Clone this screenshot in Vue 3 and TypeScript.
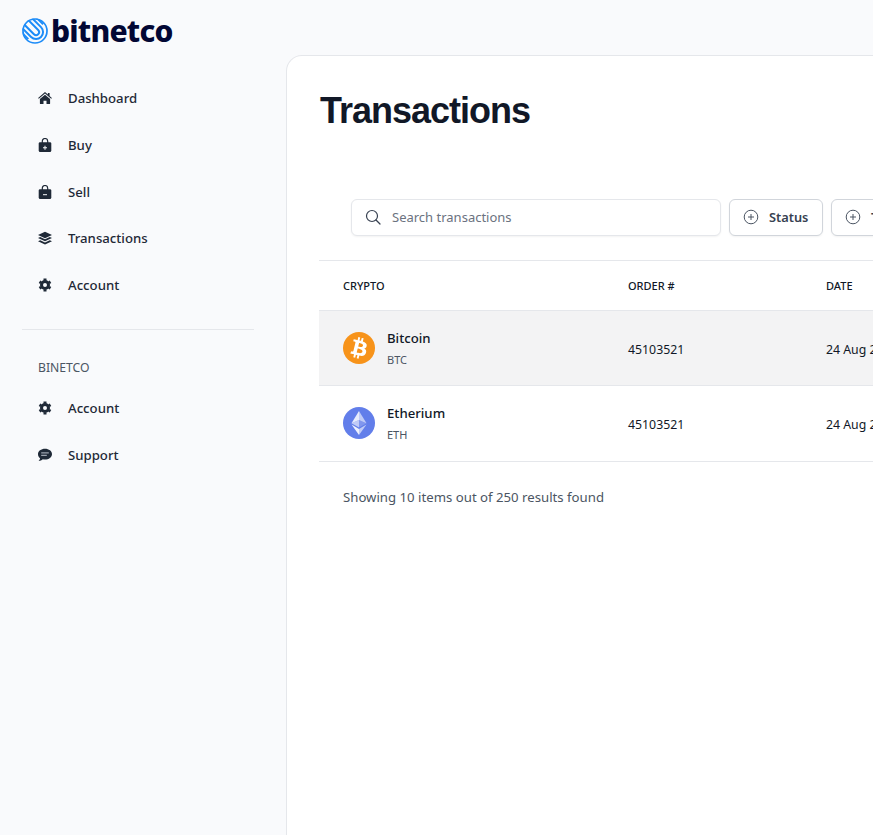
<script setup lang="ts">
interface Nav { label: string; icon: string }
const primaryNav: Nav[] = [
  { label: 'Dashboard', icon: 'home' },
  { label: 'Buy', icon: 'buy' },
  { label: 'Sell', icon: 'sell' },
  { label: 'Transactions', icon: 'layers' },
  { label: 'Account', icon: 'gear' },
]
const secondaryNav: Nav[] = [
  { label: 'Account', icon: 'gear' },
  { label: 'Support', icon: 'chat' },
]
const rows = [
  { name: 'Bitcoin', code: 'BTC', order: '45103521', date: '24 Aug 2022', coin: 'btc', active: true },
  { name: 'Etherium', code: 'ETH', order: '45103521', date: '24 Aug 2022', coin: 'eth', active: false },
]
const filters = ['Status', 'Type']
const teeth = 'M7 .6V2.500M7 11.500v1.900M12.500 3.800 10.900 4.750M1.500 10.200l1.600-.95M12.500 10.200l-1.600-.95M1.500 3.800l1.600.95'
const chat = 'M7 .8c3.900 0 7 2.400 7 5.400s-3.100 5.400-7 5.400c-.8 0-1.500-.1-2.200-.3C3.700 12.400 2.200 13 .6 13c.8-.8 1.300-1.700 1.500-2.700C.8 9.300 0 7.800 0 6.200 0 3.200 3.100.8 7 .8z'
</script>

<template>
  <div class="page">
    <aside class="sidebar">
      <div class="brand">
        <svg class="brand-mark" viewBox="0 0 26 26" fill="none" stroke="#1d8cf8">
          <defs>
            <clipPath id="mark-clip"><circle cx="13" cy="13" r="12.500" /></clipPath>
          </defs>
          <circle cx="13" cy="13" r="12" stroke-width="1.700" />
          <g clip-path="url(#mark-clip)" transform="rotate(-45 13 13)" stroke-width="2">
            <path d="M10 -4V14.500a3 3 0 0 0 6 0V-4" />
            <path d="M6 -4V14.500a7 7 0 0 0 14 0V-4" />
            <path d="M2.500 -4V14" />
            <path d="M23.500 -4V14" />
          </g>
        </svg>
        <span class="brand-name">bitnetco</span>
      </div>
      <nav class="nav">
        <a v-for="item in primaryNav" :key="item.label" class="nav-item">
          <svg class="nav-icon" viewBox="0 0 14 14" fill="#1f2937">
            <template v-if="item.icon === 'home'">
              <path d="M7 1 .1 6.900l.7.8L7 2.500l6.200 5.200.7-.8-2.300-2V2h-1.700v1.400z" />
              <path d="M7 3.700 1.900 8v4.400q0 .6.6.6h3V9.800h3V13h3q.6 0 .6-.6V8z" />
            </template>
            <template v-else-if="item.icon === 'buy' || item.icon === 'sell'">
              <path d="M2 4.200h10q1.300 0 1.300 1.300v7q0 1.500-1.500 1.500H2.200Q.7 14 .7 12.500v-7Q.7 4.200 2 4.200z" />
              <path d="M4.300 5V3.200a2.700 2.700 0 0 1 5.400 0V5" fill="none" stroke="#1f2937" stroke-width="1.200" />
              <path v-if="item.icon === 'buy'" fill="#f9fafc" d="M6.500 7.800h1v1.500H9v1H7.500v1.500h-1v-1.500H5v-1h1.500z" />
              <path v-else fill="#f9fafc" d="M5 9.200h4v1H5z" />
            </template>
            <template v-else-if="item.icon === 'layers'">
              <path d="M7 .8 14 4 7 7.200 0 4z" />
              <path d="M2.200 6.100 0 7.100l7 3.200 7-3.200-2.200-1L7 8.300z" />
              <path d="M2.200 9.200 0 10.200l7 3.200 7-3.200-2.200-1L7 11.400z" />
            </template>
            <template v-else-if="item.icon === 'gear'">
              <circle cx="7" cy="7" r="3.500" fill="none" stroke="#1f2937" stroke-width="3" />
              <path :d="teeth" stroke="#1f2937" stroke-width="3" fill="none" />
            </template>
          </svg>
          <span>{{ item.label }}</span>
        </a>
      </nav>
      <hr class="divider" />
      <p class="section-label">BINETCO</p>
      <nav class="nav">
        <a v-for="item in secondaryNav" :key="item.label" class="nav-item">
          <svg class="nav-icon" viewBox="0 0 14 14" fill="#1f2937">
            <template v-if="item.icon === 'gear'">
              <circle cx="7" cy="7" r="3.500" fill="none" stroke="#1f2937" stroke-width="3" />
              <path :d="teeth" stroke="#1f2937" stroke-width="3" fill="none" />
            </template>
            <template v-else>
              <path :d="chat" />
              <path fill="#9ca3af" d="M3.200 4.300h7.600v1.100H3.200zM3.200 6.800h5.600v1.100H3.200z" />
            </template>
          </svg>
          <span>{{ item.label }}</span>
        </a>
      </nav>
    </aside>

    <main class="content">
      <h1 class="title">Transactions</h1>
      <div class="toolbar">
        <label class="search">
          <svg class="search-icon" viewBox="0 0 16 16" fill="none" stroke="#374151" stroke-width="1.200" stroke-linecap="round">
            <circle cx="7" cy="7" r="5.500" />
            <path d="m11 11 4 4" />
          </svg>
          <span>Search transactions</span>
        </label>
        <button v-for="f in filters" :key="f" class="filter" type="button">
          <svg class="filter-icon" viewBox="0 0 16 16" fill="none" stroke="#4b5563" stroke-width="1">
            <circle cx="8" cy="8" r="6.800" />
            <path d="M8 5v6M5 8h6" />
          </svg>
          <span>{{ f }}</span>
        </button>
      </div>
      <div class="table">
        <div class="row head">
          <span>CRYPTO</span>
          <span>ORDER #</span>
          <span>DATE</span>
        </div>
        <div v-for="r in rows" :key="r.code" class="row body" :class="{ active: r.active }">
          <div class="coin">
            <svg v-if="r.coin === 'btc'" class="coin-icon" viewBox="0 0 32 32">
              <circle cx="16" cy="16" r="16" fill="#f7931a" />
              <path transform="translate(16 16) scale(1.100) translate(-16 -16)" fill="#fff" d="M23 14c.3-2.100-1.300-3.200-3.500-4l.7-2.800-1.700-.4-.7 2.700-1.400-.3.7-2.700-1.700-.4-.7 2.800-1.100-.3-2.400-.6-.4 1.800s1.300.3 1.200.3c.7.2.800.6.8 1l-1.900 7.700c-.1.200-.3.500-.8.4 0 0-1.200-.3-1.200-.3l-.8 2 2.200.5 1.200.3-.7 2.800 1.700.4.700-2.800 1.400.4-.7 2.800 1.700.4.700-2.800c2.900.6 5.100.3 6-2.300.7-2.100 0-3.300-1.600-4.100 1.200-.3 2-1 2.300-2.600zm-3.900 5.500c-.5 2.100-4 1-5.200.7l.9-3.700c1.200.3 4.800.9 4.300 3zm.5-5.500c-.5 1.900-3.400.9-4.300.7l.8-3.300c1 .2 4 .7 3.500 2.600z" />
            </svg>
            <svg v-else class="coin-icon" viewBox="0 0 32 32">
              <circle cx="16" cy="16" r="16" fill="#627eea" />
              <path fill="#fff" fill-opacity=".6" d="M16 4v8.900l7.500 3.300z" />
              <path fill="#fff" fill-opacity=".85" d="M16 4 8.500 16.200l7.500-3.300z" />
              <path fill="#fff" fill-opacity=".6" d="M16 22v6l7.500-10.400z" />
              <path fill="#fff" fill-opacity=".9" d="M16 22l-7.500-4.400L16 28z" />
              <path fill="#fff" fill-opacity=".2" d="m16 20.600 7.500-4.400-7.500-3.300z" />
              <path fill="#fff" fill-opacity=".6" d="m8.500 16.200 7.500 4.400v-7.700z" />
            </svg>
            <div class="coin-text">
              <span class="coin-name">{{ r.name }}</span>
              <span class="coin-code">{{ r.code }}</span>
            </div>
          </div>
          <span class="cell">{{ r.order }}</span>
          <span class="cell">{{ r.date }}</span>
        </div>
      </div>
      <p class="summary">Showing 10 items out of 250 results found</p>
    </main>
  </div>
</template>

<style>
html, body { margin: 0; overflow: hidden; background: #f9fafc; }
</style>

<style scoped>
.page {
  display: flex;
  width: 873px;
  height: 835px;
  overflow: hidden;
  background: #f9fafc;
  font-family: "Noto Sans", sans-serif;
  color: #111827;
}
.sidebar { flex: 0 0 286px; padding: 0 32px 0 22px; box-sizing: border-box; }
.brand { display: flex; align-items: center; height: 62px; gap: 3px; margin-bottom: 13px; }
.brand-mark { width: 26px; height: 26px; flex: none; }
.brand-name { font-size: 30px; font-weight: 800; line-height: 40px; letter-spacing: -.8px; color: #020734; }
.nav { display: flex; flex-direction: column; }
.nav-item {
  display: flex;
  align-items: center;
  gap: 16px;
  height: 46.700px;
  padding-left: 16px;
  font-size: 13.200px;
  font-weight: 500;
  color: #1f2937;
}
.nav-icon { width: 14px; height: 14px; flex: none; }
.divider { border: 0; border-top: 1px solid #e5e7eb; margin: 20.500px 0 0; }
.section-label {
  margin: 29px 0 8px 16px;
  font-size: 12.200px;
  line-height: 18px;
  font-weight: 400;
  color: #4b5563;
}
.content {
  flex: 0 0 800px;
  height: 800px;
  margin-top: 55px;
  padding: 33px 0 0 32px;
  box-sizing: border-box;
  background: #fff;
  border: 1px solid #e5e7eb;
  border-bottom: 0;
  border-radius: 16px 0 0 0;
}
.title {
  margin: 0;
  padding-left: 1px;
  font-family: "Liberation Sans", Arial, sans-serif;
  font-size: 36px;
  line-height: 44px;
  font-weight: 700;
  letter-spacing: -1px;
  color: #111827;
}
.toolbar { display: flex; gap: 8px; margin: 66px 0 24px 32px; }
.search, .filter {
  display: flex;
  align-items: center;
  box-sizing: border-box;
  height: 37px;
  padding-bottom: 2px;
  background: #fff;
  border-radius: 6px;
  font-family: inherit;
}
.search {
  width: 370px;
  flex: none;
  gap: 11px;
  padding-left: 13px;
  border: 1px solid #e5e7eb;
  box-shadow: 0 1px 2px rgba(0, 0, 0, .05);
  font-size: 13px;
  color: #6b7280;
}
.search-icon { width: 16px; height: 16px; }
.filter {
  flex: none;
  gap: 10px;
  width: 94px;
  padding-left: 13px;
  padding-right: 13px;
  border: 1px solid #d1d5db;
  box-shadow: 0 1px 2px rgba(0, 0, 0, .05);
  font-size: 12.800px;
  font-weight: 600;
  color: #374151;
}
.filter-icon { width: 16px; height: 16px; flex: none; }
.table { border-top: 1px solid #e5e7eb; }
.row {
  display: grid;
  box-sizing: border-box;
  grid-template-columns: 285px 198px 1fr;
  align-items: center;
  padding-left: 24px;
  border-bottom: 1px solid #e5e7eb;
  font-size: 12.300px;
  color: #111827;
}
.head { height: 50px; font-weight: 500; font-size: 11px; }
.body { height: 75.300px; white-space: nowrap; }
.cell { padding-top: 2px; }
.active { background: #f3f3f4; }
.coin { display: flex; align-items: center; gap: 12px; }
.coin-icon { width: 32px; height: 32px; flex: none; }
.coin-text { display: flex; flex-direction: column; gap: 4px; }
.coin-name { font-size: 13.200px; line-height: 20px; font-weight: 500; color: #111827; }
.coin-code { font-size: 11px; line-height: 16px; color: #4b5563; }
.summary { margin: 25px 0 0 24px; font-size: 13.200px; line-height: 20px; color: #4b5563; }
</style>
